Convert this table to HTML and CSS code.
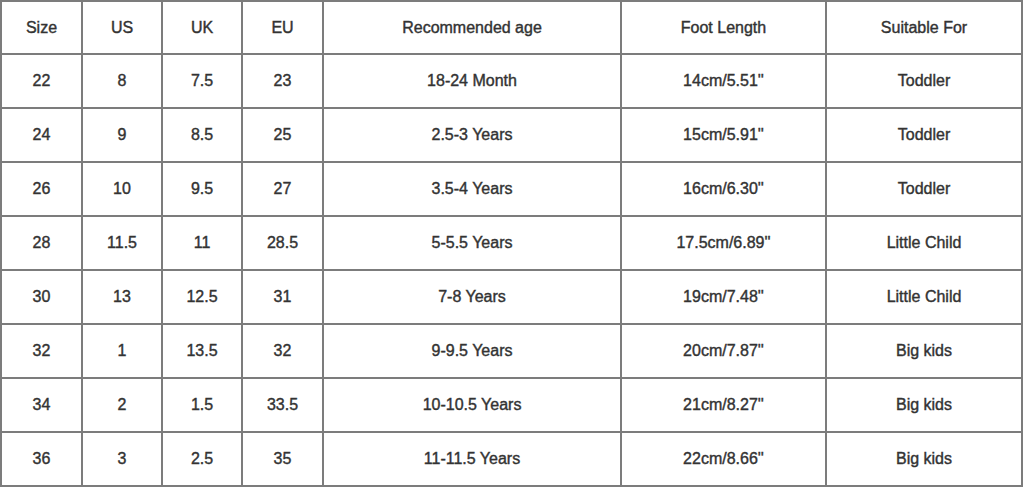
FILE: index.html
```html
<!DOCTYPE html>
<html>
<head>
<meta charset="utf-8">
<link rel="stylesheet" href="styles.css">
</head>
<body>
<table class="sizes">
  <colgroup>
    <col class="c-size"><col class="c-us"><col class="c-uk"><col class="c-eu"><col class="c-age"><col class="c-foot"><col class="c-for">
  </colgroup>
  <tr class="head"><td>Size</td><td>US</td><td>UK</td><td>EU</td><td>Recommended age</td><td>Foot Length</td><td>Suitable For</td></tr>
  <tr><td>22</td><td>8</td><td>7.5</td><td>23</td><td>18-24 Month</td><td>14cm/5.51''</td><td>Toddler</td></tr>
  <tr><td>24</td><td>9</td><td>8.5</td><td>25</td><td>2.5-3 Years</td><td>15cm/5.91''</td><td>Toddler</td></tr>
  <tr><td>26</td><td>10</td><td>9.5</td><td>27</td><td>3.5-4 Years</td><td>16cm/6.30''</td><td>Toddler</td></tr>
  <tr><td>28</td><td>11.5</td><td>11</td><td>28.5</td><td>5-5.5 Years</td><td>17.5cm/6.89''</td><td>Little Child</td></tr>
  <tr><td>30</td><td>13</td><td>12.5</td><td>31</td><td>7-8 Years</td><td>19cm/7.48''</td><td>Little Child</td></tr>
  <tr><td>32</td><td>1</td><td>13.5</td><td>32</td><td>9-9.5 Years</td><td>20cm/7.87''</td><td>Big kids</td></tr>
  <tr><td>34</td><td>2</td><td>1.5</td><td>33.5</td><td>10-10.5 Years</td><td>21cm/8.27''</td><td>Big kids</td></tr>
  <tr><td>36</td><td>3</td><td>2.5</td><td>35</td><td>11-11.5 Years</td><td>22cm/8.66''</td><td>Big kids</td></tr>
</table>
</body>
</html>
```
FILE: styles.css
```css
html, body {
  margin: 0;
  padding: 0;
  background: #ffffff;
}
.sizes {
  border-collapse: collapse;
  table-layout: fixed;
  width: 1021px;
  font-family: "Liberation Sans", Arial, sans-serif;
  font-size: 16px;
  font-weight: 400;
  color: #333333;
  -webkit-text-stroke: 0.4px #333333;
}
.c-size { width: 81px; }
.c-us { width: 80px; }
.c-uk { width: 80px; }
.c-eu { width: 81px; }
.c-age { width: 298px; }
.c-foot { width: 205px; }
.c-for { width: 196px; }
.sizes td {
  border: 2px solid #7c7c7c;
  height: 54px;
  padding: 0;
  text-align: center;
  vertical-align: middle;
  box-sizing: border-box;
}
.sizes .head td {
  height: 53px;
}
```
